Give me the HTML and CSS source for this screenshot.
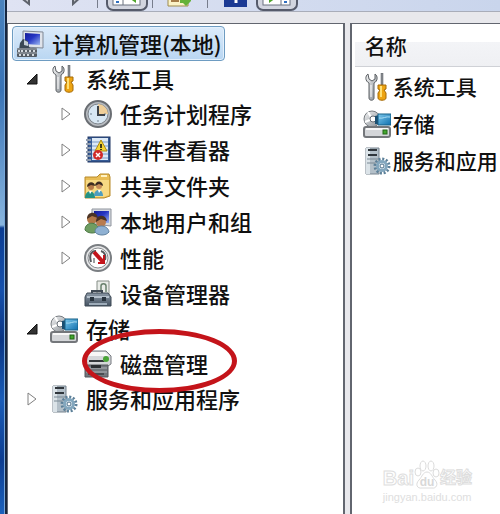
FILE: index.html
```html
<!DOCTYPE html>
<html lang="zh-CN">
<head>
  <meta charset="UTF-8" />
  <meta name="viewport" content="width=device-width, initial-scale=1">
  <title>计算机管理</title>
  <link rel="stylesheet" href="styles.css">
</head>
<body>

  <!-- shared icons -->
  <svg class="sprite" aria-hidden="true">
    <defs>
      <linearGradient id="metal" x1="0" y1="0" x2="1" y2="1">
        <stop offset="0" stop-color="#f4f5f6" />
        <stop offset="1" stop-color="#858b91" />
      </linearGradient>
      <linearGradient id="screen" x1="0" y1="0" x2="1" y2="1">
        <stop offset="0" stop-color="#141c98" />
        <stop offset="0.45" stop-color="#2636c4" />
        <stop offset="1" stop-color="#9cb8f2" />
      </linearGradient>
      <linearGradient id="cyan" x1="0" y1="0" x2="1" y2="1">
        <stop offset="0" stop-color="#7cc8ec" />
        <stop offset="1" stop-color="#0f6fae" />
      </linearGradient>
      <linearGradient id="case" x1="0" y1="0" x2="0" y2="1">
        <stop offset="0" stop-color="#8b98a5" />
        <stop offset="1" stop-color="#465463" />
      </linearGradient>
    </defs>

    <symbol id="computer" viewBox="0 0 28 28">
      <path d="M7 1l20 1v16l-20-1z" fill="#dfe3ea" stroke="#7f8794" />
      <path d="M9 3l15 1v11l-15-1z" fill="url(#screen)" />
      <path d="M4 13l3-4 5 2 1 6 5 3H3z" fill="#3b4854" />
      <path d="M8 10l4 2v4l-4-1z" fill="#c5ced6" />
      <rect x="1" y="18" width="20" height="9" rx="1" fill="#545b63" />
      <path d="M1 19h20M1 23h20" stroke="#a8afb6" />
      <path d="M3 20v2M6 20v2M10 20v2M14 20v2M18 20v2M4 24v2M8 24v2M12 24v2M17 24v2" stroke="#d5dade" stroke-width="2" />
    </symbol>

    <symbol id="tools" viewBox="0 0 28 28">
      <path d="M5 1c-3 2-3 7 1 9v15c0 3 5 3 5 0V10c4-2 4-7 1-9v5l-3 2-3-2z" fill="url(#metal)" stroke="#5c6064" />
      <path d="M8 12v12" stroke="#fff" />
      <path d="M18 0h2v12h-2z" fill="#8b8f94" stroke="#55585c" stroke-width=".5" />
      <path d="M15 12h8v4l-2 1 2 3v5c0 3-8 3-8 0v-5l2-3-2-1z" fill="#eda412" stroke="#a66a06" />
      <path d="M18 13v11" stroke="#ffdf73" stroke-width="2" />
    </symbol>

    <symbol id="clock" viewBox="0 0 28 28">
      <circle cx="14" cy="14" r="13" fill="#b7bbc0" stroke="#6a6e73" stroke-width="2" />
      <circle cx="14" cy="14" r="10" fill="#d8e7f3" stroke="#7e858c" />
      <path d="M14 14V4a10 10 0 0 1 10 10z" fill="#f0cf99" />
      <path d="M14 6v2M14 20v2M6 14h2M20 14h2" stroke="#70808e" />
      <path d="M14 6v9h7" fill="none" stroke="#3e4348" stroke-width="2" />
    </symbol>

    <symbol id="events" viewBox="0 0 28 28">
      <rect x="4" y="1" width="22" height="25" fill="#365c97" stroke="#1e3563" />
      <rect x="8" y="2" width="16" height="22" fill="#dce9f6" />
      <path d="M8 6h16M8 10h16M8 14h16M8 18h16M8 22h16" stroke="#7b9ac6" />
      <path d="M2 4h5M2 8h5M2 12h5M2 16h5M2 20h5M2 24h5" stroke="#8f9cae" stroke-width="2" />
      <path d="M17 4l6 11H11z" fill="#f5d335" stroke="#ad8c10" />
      <path d="M17 8v4M17 13v1" stroke="#403c17" stroke-width="2" />
      <circle cx="14" cy="19" r="5" fill="#d02a29" />
      <path d="M12 17l4 4M16 17l-4 4" stroke="#fff" stroke-width="1.5" />
    </symbol>

    <symbol id="share" viewBox="0 0 28 28">
      <path d="M1 5h12l3-3h9l1 3v19l-6 2H1z" fill="#e9bd55" stroke="#b78a2b" />
      <path d="M2 8h23v15l-5 2H2z" fill="#f7d983" />
      <path d="M17 4h6" stroke="#fff3c4" stroke-width="2" />
      <circle cx="7" cy="15" r="3" fill="#b77c4a" />
      <path d="M3 15c0-6 8-6 8-1l-4-1z" fill="#3f2d20" />
      <circle cx="15" cy="14" r="3" fill="#c78e5a" />
      <path d="M11 14c0-6 8-6 8 0l-4-2z" fill="#3b2b22" />
      <path d="M1 26c0-9 10-9 10 0z" fill="#249284" />
      <path d="M10 24c0-8 9-8 9 0z" fill="#4e9dbf" />
      <path d="M5 19l1 3 2-3M14 18l1 3 2-3" fill="#fff" />
    </symbol>

    <symbol id="users" viewBox="0 0 28 28">
      <path d="M8 1h19v17l-19-2z" fill="#d6dae0" stroke="#8f949d" />
      <path d="M10 3h15v12l-15-1z" fill="url(#screen)" />
      <circle cx="8" cy="11" r="5" fill="#b27848" />
      <path d="M3 11c0-8 10-8 11-1l-6-2z" fill="#4a3324" />
      <path d="M1 22c0-9 13-9 14 0-3 4-11 4-14 0z" fill="#6f9d62" stroke="#4b7843" />
      <circle cx="17" cy="14" r="5" fill="#b87c50" />
      <path d="M12 14c0-8 10-8 11-1l-6-2z" fill="#493223" />
      <path d="M11 24c0-8 13-8 14 0-3 4-11 4-14 0z" fill="#8fb1d3" stroke="#5f819f" />
    </symbol>

    <symbol id="performance" viewBox="0 0 28 28">
      <circle cx="14" cy="14" r="13" fill="#e5e6e7" stroke="#7a7e82" stroke-width="2" />
      <circle cx="14" cy="14" r="10" fill="#fff" stroke="#888c90" />
      <path d="M7 18c-2-7 0-11 5-11M17 7c4 1 5 5 4 9" fill="none" stroke="#55595d" stroke-width="2" />
      <path d="M10 8l9 10" stroke="#c3141b" stroke-width="4" />
      <path d="M20 11v8h-6" fill="none" stroke="#c3141b" stroke-width="2" />
      <path d="M10 19v-5" stroke="#3d4043" />
    </symbol>

    <symbol id="device" viewBox="0 0 28 28">
      <path d="M13 1h12v14H13z" fill="#e9ece8" stroke="#858d86" />
      <path d="M17 12V6c0-3 5-3 5 0v6" fill="none" stroke="#68806c" stroke-width="1.5" />
      <path d="M8 14v-3h10v3" fill="none" stroke="#404a54" stroke-width="2" />
      <path d="M3 13h21l3 4v9H1v-9z" fill="url(#case)" stroke="#3c4855" />
      <path d="M3 17h22" stroke="#b4c0cb" stroke-width="2" />
      <path d="M6 17h4v4H6zM18 17h4v4h-4z" fill="#29343e" />
      <path d="M5 24h18" stroke="#9eacb9" stroke-width="2" />
    </symbol>

    <symbol id="storage" viewBox="0 0 28 28">
      <circle cx="9" cy="9" r="8" fill="url(#metal)" stroke="#777c81" />
      <path d="M9 9L5 2M9 9l-7 3" stroke="#fff" stroke-width="2" />
      <circle cx="10" cy="9" r="3" fill="#fff" stroke="#697077" />
      <path d="M12 6l4-1v9h-4z" fill="#1b4e70" />
      <path d="M15 4h13v11H15z" fill="url(#cyan)" stroke="#176087" />
      <path d="M16 8c4 1 7-2 11-1" stroke="#a7dcf3" fill="none" />
      <rect x="1" y="17" width="26" height="10" rx="2" fill="#d4d6d9" stroke="#74777b" stroke-width="2" />
      <path d="M3 19h22" stroke="#f8f8f8" stroke-width="2" />
      <rect x="20" y="20" width="4" height="4" fill="#43a72d" stroke="#226718" />
    </symbol>

    <symbol id="disk" viewBox="0 0 28 28">
      <path d="M6 1h16l5 5v8l-3 2H4l-3-3V6z" fill="#d5d7da" stroke="#777b80" />
      <path d="M7 2h14l4 4H3z" fill="#f7f7f7" />
      <path d="M5 10h14l2 2H5z" fill="#34383c" />
      <circle cx="22" cy="9" r="3" fill="#49a437" />
      <path d="M1 15h23v12H1z" fill="#72777d" stroke="#53575c" />
      <path d="M2 18h21M2 22h21" stroke="#afb3b8" />
      <path d="M7 15h10v3H7z" fill="#2b2f33" />
      <path d="M4 24h16" stroke="#494d52" stroke-width="2" />
    </symbol>

    <symbol id="services" viewBox="0 0 28 28">
      <path d="M3 1h13v26H3z" fill="#b4c0c9" stroke="#76838e" />
      <path d="M3 1h4v26H3z" fill="#dbe3e8" />
      <path d="M5 3h9M5 8h9" stroke="#30363c" stroke-width="2" />
      <path d="M4 12h11M4 16h9" stroke="#7b8994" />
      <circle cx="19" cy="19" r="7" fill="none" stroke="#5d8099" stroke-width="3" stroke-dasharray="2 1.665" />
      <circle cx="19" cy="19" r="4.5" fill="#e6eff5" stroke="#83a7be" stroke-width="3" />
      <circle cx="19" cy="19" r="2" fill="#fff" stroke="#496d87" />
    </symbol>
  </svg>

  <div class="window">
    <div class="frame"></div>

    <div class="content">
      <div class="toolbar">
        <button class="tool" aria-label="后退">
          <svg width="14" height="6"><path d="M1-6v3l9 7V-6" fill="#c9ccd2" stroke="#5e636c" stroke-width="2" /></svg>
        </button>
        <button class="tool forward" aria-label="前进">
          <svg width="14" height="6"><path d="M2-6V4l9-8" fill="#c9ccd2" stroke="#5e636c" stroke-width="2" /></svg>
        </button>
        <span class="separator"></span>
        <button class="tool pressed" aria-label="显示/隐藏控制台树">
          <svg width="30" height="6">
            <rect x="1" y="-4" width="27" height="9" fill="#fff" stroke="#6b7280" />
            <path d="M11-4v9" stroke="#6b7280" />
            <path d="M4 2h3" stroke="#316fc0" stroke-width="2" />
            <path d="M24-3v6l-7-5z" fill="#4fa52c" />
          </svg>
        </button>
        <span class="separator"></span>
        <button class="tool export" aria-label="导出列表">
          <svg width="26" height="7">
            <path d="M1-3h20v9H1z" fill="#fbf3c7" stroke="#9e8b4c" />
            <path d="M4 1h8" stroke="#a57d49" stroke-width="2" />
            <path d="M13-2h11v3l-5 5-3-3h-3z" fill="#64b238" />
          </svg>
        </button>
        <span class="separator"></span>
        <button class="tool help" aria-label="帮助">
          <svg width="24" height="7">
            <path d="M0 0h23v7H0z" fill="#1c3a94" />
            <path d="M12 0v3" stroke="#fff" stroke-width="3" />
          </svg>
        </button>
        <button class="tool pressed" aria-label="显示/隐藏操作窗格">
          <svg width="30" height="6">
            <rect x="1" y="-4" width="27" height="9" fill="#fff" stroke="#6b7280" />
            <path d="M19-4v9" stroke="#6b7280" />
            <path d="M22 2h3" stroke="#316fc0" stroke-width="2" />
            <path d="M7-3v6l7-5z" fill="#4fa52c" />
          </svg>
        </button>
      </div>

      <div class="panes">
        <nav class="pane tree-pane">
          <a class="node root" href="#"><svg class="icon"><use href="#computer" /></svg>计算机管理(本地)</a>

          <ul class="tree">
            <li>
              <div class="row">
                <button class="expander open" aria-label="折叠"><svg width="12" height="12"><path d="M11 1v10H1z" /></svg></button>
                <a class="node" href="#"><svg class="icon"><use href="#tools" /></svg>系统工具</a>
              </div>
              <ul class="branch">
                <li class="row">
                  <button class="expander" aria-label="展开"><svg width="10" height="16"><path d="M1 2v12l8-6z" /></svg></button>
                  <a class="node" href="#"><svg class="icon"><use href="#clock" /></svg>任务计划程序</a>
                </li>
                <li class="row">
                  <button class="expander" aria-label="展开"><svg width="10" height="16"><path d="M1 2v12l8-6z" /></svg></button>
                  <a class="node" href="#"><svg class="icon"><use href="#events" /></svg>事件查看器</a>
                </li>
                <li class="row">
                  <button class="expander" aria-label="展开"><svg width="10" height="16"><path d="M1 2v12l8-6z" /></svg></button>
                  <a class="node" href="#"><svg class="icon"><use href="#share" /></svg>共享文件夹</a>
                </li>
                <li class="row">
                  <button class="expander" aria-label="展开"><svg width="10" height="16"><path d="M1 2v12l8-6z" /></svg></button>
                  <a class="node" href="#"><svg class="icon"><use href="#users" /></svg>本地用户和组</a>
                </li>
                <li class="row">
                  <button class="expander" aria-label="展开"><svg width="10" height="16"><path d="M1 2v12l8-6z" /></svg></button>
                  <a class="node" href="#"><svg class="icon"><use href="#performance" /></svg>性能</a>
                </li>
                <li class="row leaf">
                  <a class="node" href="#"><svg class="icon"><use href="#device" /></svg>设备管理器</a>
                </li>
              </ul>
            </li>
            <li>
              <div class="row">
                <button class="expander open" aria-label="折叠"><svg width="12" height="12"><path d="M11 1v10H1z" /></svg></button>
                <a class="node" href="#"><svg class="icon"><use href="#storage" /></svg>存储</a>
              </div>
              <ul class="branch">
                <li class="row leaf">
                  <a class="node marked" href="#"><svg class="icon"><use href="#disk" /></svg>磁盘管理</a>
                </li>
              </ul>
            </li>
            <li class="row">
              <button class="expander" aria-label="展开"><svg width="10" height="16"><path d="M1 2v12l8-6z" /></svg></button>
              <a class="node" href="#"><svg class="icon"><use href="#services" /></svg>服务和应用程序</a>
            </li>
          </ul>
        </nav>

        <main class="pane list-pane">
          <h2>名称</h2>
          <ul class="list">
            <li><a class="node" href="#"><svg class="icon"><use href="#tools" /></svg>系统工具</a></li>
            <li><a class="node" href="#"><svg class="icon"><use href="#storage" /></svg>存储</a></li>
            <li><a class="node" href="#"><svg class="icon"><use href="#services" /></svg>服务和应用</a></li>
          </ul>
        </main>
      </div>
    </div>
  </div>

  <div class="watermark">
    <div class="brand">
      <span>Bai</span>
      <svg width="26" height="30" viewBox="0 0 26 30">
        <g fill="#fff" stroke="#dcdcdc">
          <ellipse cx="4" cy="12" rx="3" ry="4" />
          <ellipse cx="9" cy="6" rx="3" ry="5" />
          <ellipse cx="17" cy="6" rx="3" ry="5" />
          <ellipse cx="22" cy="13" rx="3" ry="4" />
          <path d="M13 12c4 0 5 5 8 8 4 4 1 9-3 8H8c-5 1-7-4-3-8 3-3 4-8 8-8z" />
        </g>
        <text x="13" y="26" text-anchor="middle">du</text>
      </svg>
      <span class="brand-cn">经验</span>
    </div>
    <div class="site">jingyan.baidu.com</div>
  </div>

</body>
</html>
```

FILE: styles.css
```css
* {
  box-sizing: border-box;
  margin: 0;
  padding: 0;
}

body {
  font-family: "Noto Sans CJK SC", sans-serif;
  font-size: 22px;
  font-weight: 500;
  line-height: 35px;
  color: #101010;
  background: #fff;
  overflow: hidden;
}

ul {
  list-style: none;
}

button {
  border: none;
  background: none;
  cursor: pointer;
}

.sprite {
  position: absolute;
  width: 0;
  height: 0;
}

.window {
  display: flex;
  min-height: 100vh;
}

.frame {
  width: 7px;
  border-right: 2px solid #17263f;
  background: linear-gradient(to bottom, #4b83bd 0, #3973b6 90px, #88b5df 225px, #0b3c92 228px, #1751ac 290px, #0b3583 340px, #1b5db8 400px, #0d3d91 460px, #1d62bc 100%);
  box-shadow: inset -1px 0 #78a7d9;
}

.content {
  flex: 1;
  min-width: 0;
  display: flex;
  flex-direction: column;
}

/* toolbar */
.toolbar {
  display: flex;
  align-items: flex-start;
  height: 12px;
  padding-left: 12px;
  border-bottom: 1px solid #a9adb9;
  background: linear-gradient(to right, #dfe3f3, #c9d5ec);
}

.tool {
  display: flex;
}

.forward {
  margin-left: 38px;
  margin-right: 12px;
}

.separator {
  width: 1px;
  height: 8px;
  background: #777d8c;
}

.pressed {
  height: 11px;
  margin: 0 4px 0 8px;
  padding: 0 4px;
  border: 2px solid #565b6b;
  border-top: none;
  border-radius: 0 0 7px 7px;
  background: #d2d5df;
}

.export {
  margin: 0 14px;
}

.help {
  margin-left: 16px;
}

/* panes */
.panes {
  flex: 1;
  display: flex;
  gap: 5px;
  padding-top: 11px;
  background: #e8e8ec;
}

.pane {
  border: 1px solid #62666f;
  border-width: 1px 0 0 1px;
  background: #fff;
}

.tree-pane {
  flex: 0 0 68.5%;
  padding: 2px 0 0 4px;
  border-right-width: 2px;
}

.list-pane {
  flex: 1;
  min-width: 0;
  padding-left: 3px;
  border-left-width: 2px;
  overflow: hidden;
}

.node {
  display: flex;
  align-items: center;
  gap: 8px;
  color: inherit;
  text-decoration: none;
  white-space: nowrap;
}

.icon {
  flex: none;
  width: 28px;
  height: 28px;
}

.root {
  width: max-content;
  height: 35px;
  padding: 0 2px 0 3px;
  border: 1px solid #6e9cc2;
  border-radius: 4px;
  background: linear-gradient(to bottom, #dcebfa, #b9d6f2);
  box-shadow: inset 0 0 0 1px #e3f0fc;
}

/* tree */
.tree {
  padding-left: 12px;
}

.row {
  display: flex;
  align-items: center;
  gap: 10px;
  height: 35px;
}

.branch {
  display: flex;
  flex-direction: column;
  gap: 1px;
  padding-left: 34px;
}

.leaf {
  padding-left: 26px;
}

.expander {
  display: flex;
  justify-content: center;
  width: 16px;
}

.expander path {
  fill: #fff;
  stroke: #808080;
}

.open path {
  fill: #333;
  stroke: #111;
}

.marked {
  position: relative;
}

/* red ring round the item */
.marked::after {
  content: "";
  position: absolute;
  top: -17px;
  left: -2px;
  box-sizing: border-box;
  width: 155px;
  height: 64px;
  border: 5px solid #c4141a;
  border-radius: 50%;
}

/* list */
.list-pane h2,
.list {
  font-size: 21px;
}

.list-pane h2 {
  height: 43px;
  padding: 4px 0 0 10px;
  font-weight: 500;
  border-bottom: 1px solid #cfd1d6;
  background: linear-gradient(to bottom, #fff 42%, #f3f4f7 42%, #eff0f3);
}

.list {
  display: flex;
  flex-direction: column;
  gap: 2px;
  padding: 2px 0 0 8px;
}

.list .node {
  gap: 2px;
}

.list li {
  display: flex;
  height: 35px;
}

/* watermark */
.watermark {
  position: absolute;
  right: 28px;
  bottom: 10px;
  font-family: "Liberation Sans", "Noto Sans CJK SC", sans-serif;
  color: #fff;
}

.brand {
  display: flex;
  align-items: flex-end;
  font-size: 20px;
  font-weight: bold;
  line-height: 24px;
  -webkit-text-stroke: 1px #dedede;
}

.brand text {
  font-size: 12px;
  fill: #d8d8d8;
  -webkit-text-stroke: 0;
}

.brand-cn {
  font-size: 16px;
}

.site {
  font-size: 11px;
  line-height: 14px;
  color: #dedede;
}
```
